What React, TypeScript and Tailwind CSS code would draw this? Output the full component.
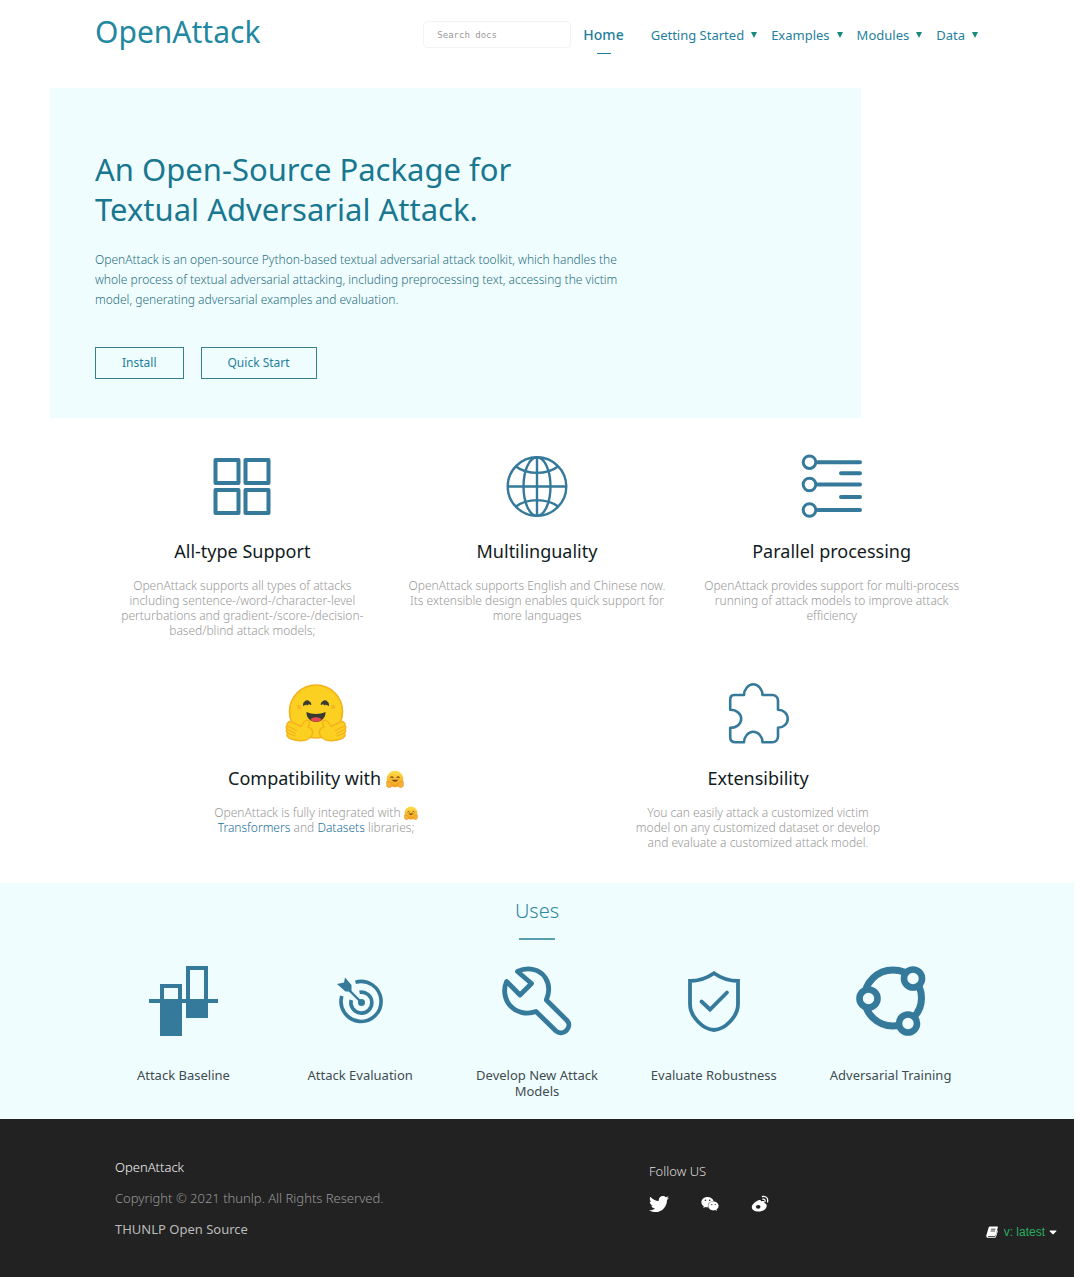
import React from "react";
import { FaTwitter, FaWeixin, FaCaretDown } from "react-icons/fa";

const INK = "#35799b";

function HugFace({ className }: { className: string }) {
  return (
    <svg viewBox="0 0 62 58" className={className} role="img" aria-label="Hugging face">
      <circle cx="31" cy="27.500" r="26.500" fill="#fbd021" stroke="#f5b01d" strokeWidth="1.600" />
      <path d="M18.500 21.500c-.6-5.500 6.500-6.500 7.500-1-1.500-1-2.800-1-3.500.5-1.200-.8-2.500-.6-4 .5zM43.500 21.500c.6-5.500-6.500-6.500-7.500-1 1.500-1 2.800-1 3.500.5 1.200-.8 2.500-.6 4 .5z" fill="#3a3b30" stroke="#3a3b30" strokeWidth="1" strokeLinejoin="round" />
      <circle cx="14" cy="23" r="2" fill="#f7b52b" />
      <circle cx="48" cy="23" r="2" fill="#f7b52b" />
      <path d="M21.500 28c5.500 2.600 13.500 2.600 19 0 .4 5.500-4 10-9.500 10S21 33.500 21.500 28z" fill="#3a3b30" />
      <path d="M25.500 35.500c2-3 9-3 11 0-2.500 3-8.500 3-11 0z" fill="#e8484e" />
      <path d="M3 38.500c1.500-1.500 3.500-1 5.500.5l7.500 3.500c2-3.500 5-7 7.500-6.200 2 .8.500 4-.3 6.700 4 1 5.800 5 3.300 9-2.500 4-7.500 5.200-13 4.500C8 56 4 54.500 2.500 52.500c-1-1.300-.6-2.700.5-3.200-1.800-.8-2.200-2.700-1-4-1.300-1.300-1.200-3 .3-3.500-.7-1.300-.3-2.500.7-3.300z" fill="#fbd021" stroke="#f5b01d" strokeWidth="1.400" />
      <path d="M59 38.500c-1.500-1.500-3.500-1-5.500.5L46 42.500c-2-3.500-5-7-7.500-6.200-2 .8-.5 4 .3 6.700-4 1-5.800 5-3.300 9 2.500 4 7.500 5.200 13 4.500 5.500-.5 9.500-2 11-4 1-1.300.6-2.700-.5-3.200 1.800-.8 2.200-2.700 1-4 1.300-1.300 1.200-3-.3-3.500.7-1.300.3-2.500-.7-3.300z" fill="#fbd021" stroke="#f5b01d" strokeWidth="1.400" />
      <path d="M2.500 42l9 4.500M2.500 45.500l8 4M3 49.300l7 2.700M59.500 42l-9 4.500M59.500 45.500l-8 4M59 49.300L52 52" stroke="#f5b01d" strokeWidth="1.200" strokeLinecap="round" />
    </svg>
  );
}

function HugEmoji({ className }: { className: string }) {
  return (
    <svg viewBox="0 0 18 18" className={className} role="img" aria-label="🤗">
      <defs>
        <linearGradient id="hug" x1="0" y1="0" x2="0" y2="1">
          <stop offset="0" stopColor="#fde04a" />
          <stop offset="1" stopColor="#f29a1f" />
        </linearGradient>
      </defs>
      <circle cx="9" cy="9" r="8.300" fill="url(#hug)" />
      <path d="M4.800 7.600q1-1.800 2.200 0M11 7.600q1-1.800 2.200 0" stroke="#7a4310" strokeWidth="1.100" fill="none" strokeLinecap="round" />
      <path d="M5.500 9.800q3.500 3.800 7 0z" fill="#7a4310" />
      <path d="M.6 11.600c1.600-.6 3.400.4 5 2.200 1 1.200.4 3.400-1.400 3.700-2.200.2-3.600-.6-3.600-2.600zM17.400 11.600c-1.600-.6-3.400.4-5 2.200-1 1.200-.4 3.400 1.400 3.700 2.200.2 3.600-.6 3.600-2.600z" fill="#f8b232" stroke="#e08a1c" strokeWidth=".5" />
    </svg>
  );
}

const GridIcon = () => (
  <svg viewBox="0 0 64 64" className="size-16" fill="none" stroke={INK} strokeWidth="4" strokeLinejoin="round">
    <path d="M5.500 6h23v23h-23zM35.500 6h23v23h-23zM5.500 36h23v23h-23zM35.500 36h23v23h-23z" />
  </svg>
);

const GlobeIcon = () => (
  <svg viewBox="0 0 64 64" className="size-16" fill="none" stroke={INK} strokeWidth="2.400">
    <circle cx="32" cy="32.500" r="29.300" />
    <ellipse cx="32" cy="32.500" rx="13.500" ry="29.300" />
    <path d="M32 3v59M2.500 32.500h59M11 12.500c11 8.500 31 8.500 42 0M11 52.500c11-8.500 31-8.500 42 0" />
  </svg>
);

const ParallelIcon = () => (
  <svg viewBox="0 0 64 64" className="size-16" fill="none" stroke={INK} strokeLinecap="round">
    <g strokeWidth="3">
      <circle cx="9.500" cy="8.200" r="6.300" />
      <circle cx="9.500" cy="30.500" r="6.300" />
      <circle cx="9.500" cy="56" r="6.300" />
    </g>
    <path strokeWidth="4" d="M18 8.200h42M18 30.500h42M18 56h42M41 19.200h19M41 43h19" />
  </svg>
);

const PuzzleIcon = () => (
  <svg viewBox="0 0 64 64" className="size-16" fill="none" stroke={INK} strokeWidth="2.600" strokeLinejoin="round">
    <path d="M8 14h10c0-5 4-10.700 9.300-10.700S36.500 9 36.500 14h10c3 0 5.500 2.500 5.500 5.500v9.300c5.500 0 9.700 4 9.700 9s-4.200 9-9.700 9v9c0 3-2.500 5.500-5.500 5.500h-10c0-5.500-4-10.500-9.200-10.500S18 55.800 18 61.300H9.500C6 61.300 4.200 59 4.200 56v-9.200c6.500 0 11-4 11-9s-4.500-9-11-9V19c0-3 1.300-5 3.800-5z" />
  </svg>
);

const BaselineIcon = () => (
  <svg viewBox="0 0 70 70" className="size-[70px]">
    <path d="M1 33h69v4H1z" fill={INK} />
    <path d="M12 18h22v52H12zM38 0h22v52H38z" fill={INK} />
    <path d="M16 22h14v11H16zM42 4h14v29H42z" fill="#f0fdff" />
  </svg>
);

const TargetIcon = () => (
  <svg viewBox="0 0 70 70" className="size-[70px]" fill="none" stroke={INK} strokeWidth="3.600">
    <path d="M30.500 16.200A20 20 0 1 1 16.800 30" />
    <path d="M34.500 26.300A10.500 10.500 0 1 1 26.200 34" />
    <circle cx="36.500" cy="36.500" r="3.500" fill={INK} stroke="none" />
    <path d="M20 20l16 16" strokeWidth="2.400" />
    <path d="M12 18l8.500 7.500h6V19L20 11.500l-1 5z" fill={INK} stroke="none" />
  </svg>
);

const WrenchIcon = () => (
  <svg viewBox="0 0 70 70" className="size-[70px]" fill="none" stroke={INK} strokeWidth="4.800" strokeLinejoin="round">
    <path d="M15.500 5.500C25.500.5 38 3 43.500 12c4 6.500 4 14.500.8 22L65 54.500c6 6.500-4 16.500-11 10.500L34 45.500C24.500 49 13.500 46.500 7.200 38.500 2.200 32 1.300 23 4.600 15.500L18 29l11.500-11.500L15.500 5.500z" />
  </svg>
);

const ShieldIcon = () => (
  <svg viewBox="0 0 70 70" className="size-[70px]" fill="none" stroke={INK} strokeWidth="3.800">
    <path d="M35 7.200C28 12 20 15 11 15v23c0 12.500 13 25.500 24 26 11-.5 24-13.500 24-26V15c-9 0-17-3-24-7.800z" />
    <path d="M22.500 35.500l8.500 8 17-17" strokeLinecap="round" />
  </svg>
);

const RingIcon = () => (
  <svg viewBox="0 0 70 70" className="size-[70px]" stroke={INK} fill="none" strokeWidth="7">
    <ellipse cx="37" cy="32" rx="28.500" ry="28" />
    <g fill="#f0fdff" strokeWidth="6.600">
      <circle cx="12.500" cy="32.500" r="9" />
      <circle cx="57" cy="12.500" r="9" />
      <circle cx="52" cy="57.500" r="9" />
    </g>
  </svg>
);

const WeiboIcon = () => (
  <svg viewBox="0 0 18 18" className="size-[18px]">
    <path d="M7.500 5.200c1.500-.6 2.600-.2 2.500 1.300 2-.8 3.800-.5 3.400 1.500 1.800.6 2.600 1.800 2.200 3.600-.6 2.800-4 5-8 5C3.600 16.600.8 14.800.8 12c0-2.400 3.500-5.700 6.700-6.800z" fill="#fff" />
    <ellipse cx="7.200" cy="11.800" rx="2.300" ry="1.900" fill="#222" />
    <path d="M11.500 1.500c3.500-.7 6 2 5 5.500M11.800 4.200c1.600-.3 2.600.8 2.200 2.300" fill="none" stroke="#fff" strokeWidth="1.300" strokeLinecap="round" />
  </svg>
);

const BookIcon = () => (
  <svg viewBox="0 0 12 12" className="size-3">
    <path d="M4 .5h7.200c.6 0 .8.400.6 1L9.700 9c-.2.600-.6.900-1.200.9H2.200c-.4.500-.1.900.5.900h6.600l2-6.600.6.500-1.800 6c-.2.700-.6 1-1.300 1H1.800C.6 11.700 0 10.800.3 9.600L2.500 2C2.800 1 3.200.5 4 .5z" fill="#fff" />
    <path d="M5 3.200h4.500M4.500 5h4.500" stroke="#222" strokeWidth=".8" />
  </svg>
);

function Feature({ icon, title, children }: { icon: React.ReactNode; title: React.ReactNode; children: React.ReactNode }) {
  return (
    <article className="flex flex-col items-center text-center">
      <div className="flex h-16 items-center">{icon}</div>
      <h2 className="mt-[19px] text-[18px] leading-7 text-[#111b22]">{title}</h2>
      <p className="mt-[13px] text-[12px] leading-[15px] font-light whitespace-nowrap text-[#999]">{children}</p>
    </article>
  );
}

const menu = ["Getting Started", "Examples", "Modules", "Data"];

const uses: [React.ReactNode, React.ReactNode][] = [
  [<BaselineIcon />, "Attack Baseline"],
  [<TargetIcon />, "Attack Evaluation"],
  [<WrenchIcon />, <>Develop New Attack<br />Models</>],
  [<ShieldIcon />, "Evaluate Robustness"],
  [<RingIcon />, "Adversarial Training"],
];

export default function App() {
  return (
    <div className="bg-white pr-[6px] font-['Noto_Sans',sans-serif] text-[#1f7f9b]">
      <header className="flex h-[88px] items-start pr-24 pl-[95px] whitespace-nowrap">
        <a href="#" className="mt-3 text-[30px] leading-10 text-[#22889f]">OpenAttack</a>
        <input
          type="search"
          aria-label="Search docs"
          placeholder="Search docs"
          className="mt-[21px] ml-auto h-[27px] w-[148px] rounded-sm border border-[#f3f3f3] px-[13px] font-['DejaVu_Sans_Mono',monospace] text-[9px] placeholder:text-[#999]"
        />
        <nav className="mt-[25px] ml-3 flex text-[13px] leading-5">
          <a href="#" className="mr-[27px] flex flex-col items-center text-[14px] leading-5 font-medium">
            Home
            <span className="mt-2 h-px w-[14px] bg-[#1f7f9b]" />
          </a>
          <ul className="flex gap-[14px]">
            {menu.map((m) => (
              <li key={m}>
                <a href="#" className="flex items-center gap-[7px]">
                  {m}
                  <svg viewBox="0 0 6 6" className="size-[6px]"><path d="M0 0h6L3 6z" fill="#178a7d" /></svg>
                </a>
              </li>
            ))}
          </ul>
        </nav>
      </header>

      <main>
        <section className="mr-[213px] ml-[50px] bg-[#effdff] px-[45px] pt-[61px] pb-[39px]">
          <h1 className="text-[31px] leading-10 text-[#197790]">
            An Open-Source Package for<br />Textual Adversarial Attack.
          </h1>
          <p className="mt-[21px] text-[12px] leading-5 font-light whitespace-nowrap text-[#2a6f80]">
            OpenAttack is an open-source Python-based textual adversarial attack toolkit, which handles the<br />
            whole process of textual adversarial attacking, including preprocessing text, accessing the victim<br />
            model, generating adversarial examples and evaluation.
          </p>
          <div className="mt-[37px] flex gap-[17px]">
            <button className="h-8 border border-[#35818e] px-[26px] text-[12px]">Install</button>
            <button className="h-8 border border-[#35818e] px-[26px] text-[12px]">Quick Start</button>
          </div>
        </section>

        <section className="px-[95px] pt-9">
          <div className="grid grid-cols-3">
            <Feature icon={<GridIcon />} title="All-type Support">
              OpenAttack supports all types of attacks<br />including sentence-/word-/character-level<br />
              perturbations and gradient-/score-/decision-<br />based/blind attack models;
            </Feature>
            <Feature icon={<GlobeIcon />} title="Multilinguality">
              OpenAttack supports English and Chinese now.<br />Its extensible design enables quick support for<br />more languages
            </Feature>
            <Feature icon={<ParallelIcon />} title="Parallel processing">
              OpenAttack provides support for multi-process<br />running of attack models to improve attack<br />efficiency
            </Feature>
          </div>
          <div className="mt-[43px] grid grid-cols-2">
            <Feature
              icon={<HugFace className="h-[58px] w-[62px]" />}
              title={<>Compatibility with <HugEmoji className="inline-block size-[18px] align-[-3px]" /></>}
            >
              OpenAttack is fully integrated with <HugEmoji className="inline-block size-[14px] align-[-3px]" /><br />
              <a href="#" className="text-[#1a6f9c]">Transformers</a> and{" "}
              <a href="#" className="text-[#1a6f9c]">Datasets</a> libraries;
            </Feature>
            <Feature icon={<PuzzleIcon />} title="Extensibility">
              You can easily attack a customized victim<br />model on any customized dataset or develop<br />and evaluate a customized attack model.
            </Feature>
          </div>
        </section>

        <section className="mt-[33px] flex flex-col items-center bg-[#effdff] px-[95px] pt-3 pb-5">
          <h2 className="text-[20px] leading-8 font-light text-[#2f87a0]">Uses</h2>
          <span className="mt-[11px] h-[2px] w-9 bg-[#5b9fae]" />
          <ul className="mt-[26px] grid w-full grid-cols-5">
            {uses.map(([icon, label], i) => (
              <li key={i} className="flex flex-col items-center text-center text-[13px] leading-4 whitespace-nowrap text-[#3f4c50]">
                {icon}
                <span className="mt-[31px]">{label}</span>
              </li>
            ))}
          </ul>
        </section>
      </main>

      <footer className="flex min-h-[158px] bg-[#222] pr-[15px] pl-[115px] text-[13px] leading-5 whitespace-nowrap">
        <div className="mt-[38px] flex w-[534px] flex-col gap-[11px]">
          <a href="#" className="font-light text-[#f4f4f4]">OpenAttack</a>
          <p className="font-light text-[#999]">Copyright © 2021 thunlp. All Rights Reserved.</p>
          <a href="#" className="text-[#bbb]">THUNLP Open Source</a>
        </div>
        <div className="mt-[42px]">
          <p className="font-light text-[#ddd]">Follow US</p>
          <div className="mt-[13px] flex items-center gap-8 text-[18px] text-white">
            <a href="#" aria-label="Twitter"><FaTwitter className="size-5" /></a>
            <a href="#" aria-label="WeChat"><FaWeixin /></a>
            <a href="#" aria-label="Weibo"><WeiboIcon /></a>
          </div>
        </div>
        <button className="mt-[103px] ml-auto flex h-5 items-center font-['Liberation_Sans',sans-serif] text-[12px] text-[#27ae60]">
          <BookIcon />
          <span className="ml-[6px]">v: latest</span>
          <FaCaretDown className="ml-[2px] text-[12px] text-white" />
        </button>
      </footer>
    </div>
  );
}
